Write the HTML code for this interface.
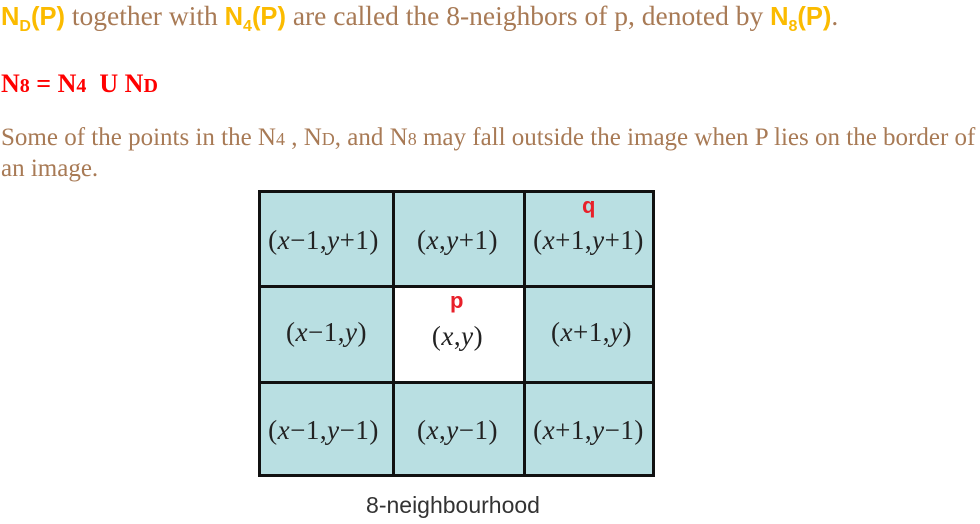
<!DOCTYPE html>
<html><head><meta charset="utf-8"><style>
body{margin:0;width:980px;height:524px;background:#fff;position:relative;overflow:hidden;font-family:"Liberation Serif",serif;}
.t{position:absolute;left:1px;white-space:nowrap;color:#a87a55;font-size:27.5px;}
.o{color:#fbbb00;font-family:"Liberation Sans",sans-serif;font-weight:bold;font-size:25.5px;}
.o sub{font-size:16px;vertical-align:-6px;}
.r{color:#ff0000;font-weight:bold;font-size:26px;}
.r small{font-size:20px;}
.grid{position:absolute;left:258px;top:190px;width:397px;height:287px;border:3px solid #111;box-sizing:border-box;background:#b9dfe2;}
.vl{position:absolute;top:0;bottom:0;width:3px;background:#111;}
.hl{position:absolute;left:0;right:0;height:3px;background:#111;}
.c{position:absolute;font-size:27px;color:#222;white-space:nowrap;text-align:center;width:131px;letter-spacing:0.5px;}
.c i{font-style:italic;}
.lab{position:absolute;color:#e8202a;font-family:"Liberation Sans",sans-serif;font-weight:bold;font-size:22px;}
</style></head><body>
<div class="t" style="top:0px"><span class="o">N<sub>D</sub>(P)</span> together with <span class="o">N<sub>4</sub>(P)</span> are called the 8-neighbors of p, denoted by <span class="o">N<sub>8</sub>(P)</span>.</div>
<div class="t r" style="top:69px;font-size:26px">N<small>8</small> = N<small>4</small>&nbsp; U N<small>D</small></div>
<div class="t" style="top:124px;font-size:25px">Some of the points in the N<span style="font-size:18px">4</span> , N<span style="font-size:18px">D</span>, and N<span style="font-size:18px">8</span> may fall outside the image when P lies on the border of</div>
<div class="t" style="top:155px;font-size:25px">an image.</div>
<div class="grid">
<div style="position:absolute;left:134px;top:95px;width:131px;height:94px;background:#fff"></div>
<div class="vl" style="left:131px"></div><div class="vl" style="left:262px"></div>
<div class="hl" style="top:92px"></div><div class="hl" style="top:188px"></div>
<div class="c" style="left:-3px;top:32px">(<i>x</i>−1,<i>y</i>+1)</div>
<div class="c" style="left:131px;top:32px">(<i>x</i>,<i>y</i>+1)</div>
<div class="c" style="left:262px;top:32px">(<i>x</i>+1,<i>y</i>+1)</div>
<div class="c" style="left:0;top:124px">(<i>x</i>−1,<i>y</i>)</div>
<div class="c" style="left:131px;top:128px">(<i>x</i>,<i>y</i>)</div>
<div class="c" style="left:265px;top:124px">(<i>x</i>+1,<i>y</i>)</div>
<div class="c" style="left:-3px;top:222px">(<i>x</i>−1,<i>y</i>−1)</div>
<div class="c" style="left:131px;top:222px">(<i>x</i>,<i>y</i>−1)</div>
<div class="c" style="left:262px;top:222px">(<i>x</i>+1,<i>y</i>−1)</div>
<div class="lab" style="left:321px;top:0px">q</div>
<div class="lab" style="left:189px;top:95px">p</div>
</div>
<div style="position:absolute;left:303px;top:492px;width:300px;text-align:center;font-family:'Liberation Sans',sans-serif;font-size:23px;color:#333">8-neighbourhood</div>
</body></html>
